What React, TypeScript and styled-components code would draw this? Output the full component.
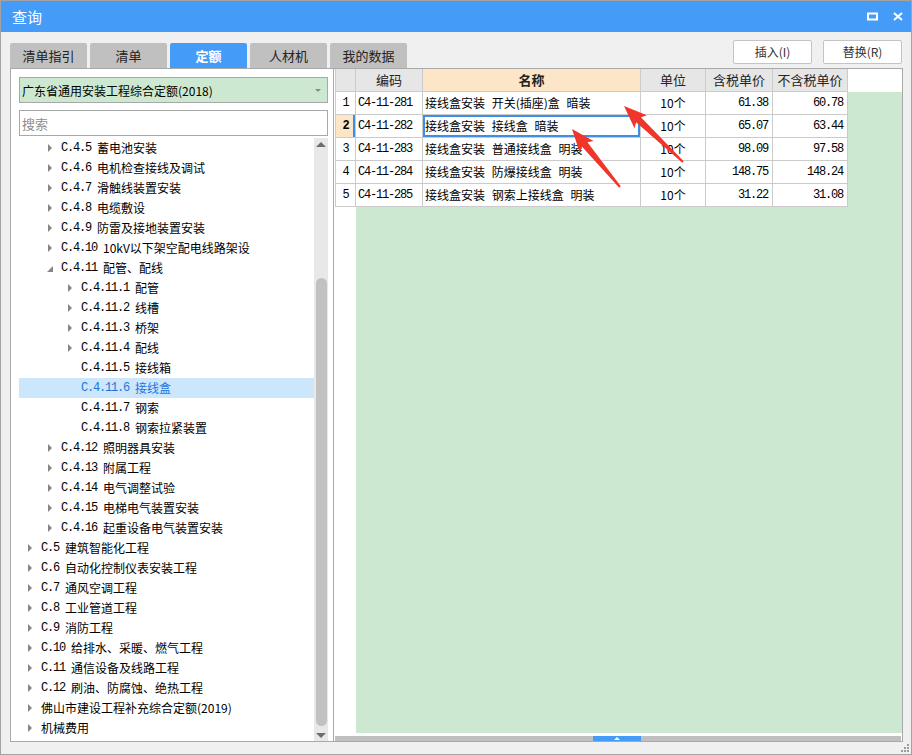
import React from "react";
import styled, { createGlobalStyle } from "styled-components";

const GlobalStyle = createGlobalStyle`
  html, body {
    margin: 0;
    padding: 0;
    background: #ffffff;
  }
  body {
    font-family: "Noto Sans CJK SC", "Liberation Sans", sans-serif;
    font-size: 12px;
    color: #000;
  }
`;

const CJK = `"Noto Sans CJK SC", "Liberation Sans", sans-serif`;
const MONO = `"Liberation Mono", "Noto Sans CJK SC", monospace`;
const BLUE = "#459cf8";
const GREEN = "#cde8d0";
const GRID = "#cbcbcb";

const Window = styled.div`
  position: relative;
  width: 912px;
  height: 755px;
  box-sizing: border-box;
  border: 1px solid #a3a3a3;
  background: #f0f0f0;
  display: flex;
  flex-direction: column;
  font-family: ${CJK};
`;

const TitleBar = styled.div`
  height: 31px;
  flex: none;
  background: ${BLUE};
  display: flex;
  align-items: center;
  padding: 0 8px 0 11px;
  color: #fff;
`;

const Title = styled.div`
  flex: 1;
  font-size: 15px;
  line-height: 31px;
`;

const TitleButtons = styled.div`
  display: flex;
  align-items: center;
  gap: 15px;
`;

const Toolbar = styled.div`
  height: 36px;
  flex: none;
  display: flex;
  justify-content: space-between;
  padding: 0 9px;
`;

const Tabs = styled.div`
  align-self: flex-end;
  display: flex;
  gap: 3px;
`;

const Tab = styled.div<{ $active?: boolean }>`
  width: 77px;
  height: 25px;
  box-sizing: border-box;
  border-radius: 2px 2px 0 0;
  background: ${(p) => (p.$active ? BLUE : "#c0c0c0")};
  color: ${(p) => (p.$active ? "#fff" : "#222")};
  font-weight: ${(p) => (p.$active ? 700 : 400)};
  font-size: 13px;
  line-height: 25px;
  text-align: center;
`;

const Actions = styled.div`
  display: flex;
  gap: 11px;
  padding-top: 8px;
`;

const Button = styled.div`
  width: 79px;
  height: 24px;
  box-sizing: border-box;
  border: 1px solid #c4c4c4;
  border-radius: 2px;
  background: #fff;
  color: #333;
  font-size: 12px;
  line-height: 22px;
  text-align: center;
`;

const Main = styled.div`
  height: 674px;
  flex: none;
  display: flex;
  padding: 0 8px 0 9px;
`;

const LeftPanel = styled.div`
  width: 324px;
  flex: none;
  box-sizing: border-box;
  border: 1px solid #a9a9a9;
  background: #fff;
  padding: 8px 5px 0 8px;
  display: flex;
  flex-direction: column;
`;

const Select = styled.div`
  height: 26px;
  flex: none;
  box-sizing: border-box;
  border: 1px solid #a8a8a8;
  background: ${GREEN};
  display: flex;
  align-items: center;
  padding: 0 6px 0 2px;
  font-size: 12px;
  margin-bottom: 7px;
`;

const SelectText = styled.span`
  flex: 1;
`;

const Caret = styled.span`
  width: 0;
  height: 0;
  border-left: 3px solid transparent;
  border-right: 3px solid transparent;
  border-top: 3px solid #8a8a8a;
`;

const Search = styled.input`
  height: 26px;
  flex: none;
  box-sizing: border-box;
  border: 1px solid #a8a8a8;
  padding: 0 2px;
  margin: 0 0 2px 0;
  font-family: ${CJK};
  font-size: 13px;
  outline: none;
  &::placeholder {
    color: #8f8f8f;
  }
`;

const TreeArea = styled.div`
  flex: 1;
  display: flex;
  min-height: 0;
`;

const TreeList = styled.div`
  flex: 1;
  overflow: hidden;
`;

const TreeRow = styled.div<{ $level: number; $selected?: boolean }>`
  height: 20px;
  display: flex;
  align-items: center;
  padding-left: ${(p) => 9 + p.$level * 20}px;
  background: ${(p) => (p.$selected ? "#cce6fc" : "transparent")};
  color: ${(p) => (p.$selected ? "#1f74dc" : "#000")};
  white-space: nowrap;
`;

const Toggle = styled.span<{ $state: "collapsed" | "expanded" | "leaf" }>`
  width: 13px;
  height: 20px;
  flex: none;
  display: flex;
  align-items: center;
  &::before {
    content: "";
    display: ${(p) => (p.$state === "leaf" ? "none" : "block")};
    width: 0;
    height: 0;
    ${(p) =>
      p.$state === "collapsed"
        ? `border-left: 4px solid #858585;
           border-top: 4px solid transparent;
           border-bottom: 4px solid transparent;`
        : `border-bottom: 6px solid #858585;
           border-left: 6px solid transparent;
           margin-top: 2px;
           margin-left: -1px;`}
  }
`;

const Code = styled.span`
  font-family: ${MONO};
  font-size: 12px;
  letter-spacing: -1.2px;
  margin-right: 6px;
`;

const Name = styled.span`
  font-family: ${CJK};
  font-size: 12px;
  line-height: 20px;
`;

const VScroll = styled.div`
  width: 14px;
  flex: none;
  background: #e8e8e8;
  display: flex;
  flex-direction: column;
  align-items: center;
`;

const ScrollArrow = styled.div<{ $down?: boolean }>`
  height: 12px;
  flex: none;
  display: flex;
  align-items: center;
  justify-content: center;
  &::before {
    content: "";
    width: 0;
    height: 0;
    border-left: 5px solid transparent;
    border-right: 5px solid transparent;
    ${(p) =>
      p.$down
        ? "border-top: 5px solid #6e6e6e;"
        : "border-bottom: 5px solid #6e6e6e;"}
  }
`;

const ScrollTrack = styled.div`
  flex: 1;
  width: 100%;
  display: flex;
  flex-direction: column;
  align-items: center;
`;

const ScrollThumb = styled.div`
  width: 11px;
  height: 448px;
  margin-top: 128px;
  border-radius: 6px;
  background: #c1c1c1;
`;

const RightPanel = styled.div`
  flex: 1;
  box-sizing: border-box;
  border: 1px solid #a9a9a9;
  border-left: none;
  background: #fff;
  padding-left: 1px;
  display: flex;
  flex-direction: column;
`;

const HeaderRow = styled.div`
  height: 23px;
  flex: none;
  display: flex;
  background: #fff;
`;

const Body = styled.div`
  flex: 1;
  background: linear-gradient(90deg, #fff 0 21px, ${GREEN} 21px);
`;

const DataRow = styled.div`
  height: 23px;
  display: flex;
`;

const Cell = styled.div<{
  $w: number;
  $align?: string;
  $mono?: boolean;
  $bg?: string;
  $bold?: boolean;
  $first?: boolean;
  $focus?: boolean;
  $marker?: boolean;
  $header?: boolean;
}>`
  width: ${(p) => p.$w}px;
  flex: none;
  height: 23px;
  box-sizing: border-box;
  border-right: 1px solid ${GRID};
  border-bottom: 1px solid ${GRID};
  border-left: ${(p) => (p.$first ? `1px solid ${GRID}` : "none")};
  background: ${(p) => p.$bg || "#fff"};
  text-align: ${(p) => p.$align || "left"};
  padding: ${(p) =>
    p.$align === "right" ? "0 4px 0 0" : p.$align === "center" ? "0" : "0 0 0 2px"};
  font-family: ${(p) => (p.$mono ? MONO : CJK)};
  font-size: ${(p) => (p.$header ? 13 : 12)}px;
  letter-spacing: ${(p) => (p.$mono ? "-1.2px" : "0")};
  word-spacing: 4px;
  font-weight: ${(p) => (p.$bold ? 700 : 400)};
  line-height: 22px;
  white-space: nowrap;
  overflow: hidden;
  color: ${(p) => (p.$header ? "#222" : "#000")};
  box-shadow: ${(p) =>
    p.$focus
      ? "inset 0 0 0 2px #3d8fe6"
      : p.$marker
      ? "inset -2px 0 0 #3d8fe6"
      : "none"};
`;

const BottomGap = styled.div`
  height: 3px;
  flex: none;
`;

const HScroll = styled.div`
  height: 5px;
  flex: none;
  margin-right: 1px;
  background: #c0c0c0;
  display: flex;
`;

const HThumb = styled.div`
  width: 48px;
  margin-left: 258px;
  background: ${BLUE};
  display: flex;
  align-items: center;
  justify-content: center;
  &::before {
    content: "";
    width: 0;
    height: 0;
    border-left: 3px solid transparent;
    border-right: 3px solid transparent;
    border-bottom: 3px solid #fff;
  }
`;

const Footer = styled.div`
  flex: 1;
  display: flex;
  justify-content: flex-end;
  align-items: flex-end;
  padding: 0 2px 2px 0;
`;

const Overlay = styled.svg`
  position: absolute;
  top: -1px;
  left: -1px;
  pointer-events: none;
`;

type Node = {
  level: number;
  code?: string;
  name: string;
  state: "collapsed" | "expanded" | "leaf";
  selected?: boolean;
};

const tree: Node[] = [
  { level: 1, code: "C.4.5", name: "蓄电池安装", state: "collapsed" },
  { level: 1, code: "C.4.6", name: "电机检查接线及调试", state: "collapsed" },
  { level: 1, code: "C.4.7", name: "滑触线装置安装", state: "collapsed" },
  { level: 1, code: "C.4.8", name: "电缆敷设", state: "collapsed" },
  { level: 1, code: "C.4.9", name: "防雷及接地装置安装", state: "collapsed" },
  { level: 1, code: "C.4.10", name: "10kV以下架空配电线路架设", state: "collapsed" },
  { level: 1, code: "C.4.11", name: "配管、配线", state: "expanded" },
  { level: 2, code: "C.4.11.1", name: "配管", state: "collapsed" },
  { level: 2, code: "C.4.11.2", name: "线槽", state: "collapsed" },
  { level: 2, code: "C.4.11.3", name: "桥架", state: "collapsed" },
  { level: 2, code: "C.4.11.4", name: "配线", state: "collapsed" },
  { level: 2, code: "C.4.11.5", name: "接线箱", state: "leaf" },
  { level: 2, code: "C.4.11.6", name: "接线盒", state: "leaf", selected: true },
  { level: 2, code: "C.4.11.7", name: "钢索", state: "leaf" },
  { level: 2, code: "C.4.11.8", name: "钢索拉紧装置", state: "leaf" },
  { level: 1, code: "C.4.12", name: "照明器具安装", state: "collapsed" },
  { level: 1, code: "C.4.13", name: "附属工程", state: "collapsed" },
  { level: 1, code: "C.4.14", name: "电气调整试验", state: "collapsed" },
  { level: 1, code: "C.4.15", name: "电梯电气装置安装", state: "collapsed" },
  { level: 1, code: "C.4.16", name: "起重设备电气装置安装", state: "collapsed" },
  { level: 0, code: "C.5", name: "建筑智能化工程", state: "collapsed" },
  { level: 0, code: "C.6", name: "自动化控制仪表安装工程", state: "collapsed" },
  { level: 0, code: "C.7", name: "通风空调工程", state: "collapsed" },
  { level: 0, code: "C.8", name: "工业管道工程", state: "collapsed" },
  { level: 0, code: "C.9", name: "消防工程", state: "collapsed" },
  { level: 0, code: "C.10", name: "给排水、采暖、燃气工程", state: "collapsed" },
  { level: 0, code: "C.11", name: "通信设备及线路工程", state: "collapsed" },
  { level: 0, code: "C.12", name: "刷油、防腐蚀、绝热工程", state: "collapsed" },
  { level: 0, name: "佛山市建设工程补充综合定额(2019)", state: "collapsed" },
  { level: 0, name: "机械费用", state: "collapsed" },
];

type Col = {
  key: "code" | "name" | "unit" | "tax" | "noTax";
  title: string;
  width: number;
  align: string;
  mono?: boolean;
};

const columns: Col[] = [
  { key: "code", title: "编码", width: 67, align: "left", mono: true },
  { key: "name", title: "名称", width: 218, align: "left" },
  { key: "unit", title: "单位", width: 65, align: "center" },
  { key: "tax", title: "含税单价", width: 67, align: "right", mono: true },
  { key: "noTax", title: "不含税单价", width: 75, align: "right", mono: true },
];

const rows = [
  { code: "C4-11-281", name: "接线盒安装 开关(插座)盒 暗装", unit: "10个", tax: "61.38", noTax: "60.78" },
  { code: "C4-11-282", name: "接线盒安装 接线盒 暗装", unit: "10个", tax: "65.07", noTax: "63.44" },
  { code: "C4-11-283", name: "接线盒安装 普通接线盒 明装", unit: "10个", tax: "98.09", noTax: "97.58" },
  { code: "C4-11-284", name: "接线盒安装 防爆接线盒 明装", unit: "10个", tax: "148.75", noTax: "148.24" },
  { code: "C4-11-285", name: "接线盒安装 钢索上接线盒 明装", unit: "10个", tax: "31.22", noTax: "31.08" },
];

const SELECTED_ROW = 1;

// red annotation arrow, drawn along its own axis from tail to tip
const Arrow: React.FC<{ x1: number; y1: number; x2: number; y2: number }> = ({
  x1,
  y1,
  x2,
  y2,
}) => {
  const len = Math.hypot(x2 - x1, y2 - y1);
  const angle = (Math.atan2(y2 - y1, x2 - x1) * 180) / Math.PI;
  const pts = [
    [0, -1],
    [len - 20, -3.5],
    [len - 23, -9],
    [len, 0],
    [len - 23, 9],
    [len - 20, 3.5],
    [0, 1],
  ]
    .map((p) => p.join(","))
    .join(" ");
  return (
    <g transform={`translate(${x1} ${y1}) rotate(${angle})`}>
      <polygon points={pts} fill="#f0352b" />
    </g>
  );
};

export default function App() {
  return (
    <>
      <GlobalStyle />
      <Window>
        <TitleBar>
          <Title>查询</Title>
          <TitleButtons>
            <svg width="11" height="9" viewBox="0 0 11 9">
              <rect x="1" y="1.5" width="9" height="6" fill="none" stroke="#fff" strokeWidth="2" />
            </svg>
            <svg width="10" height="9" viewBox="0 0 10 9">
              <path d="M1 1L9 8M9 1L1 8" stroke="#fff" strokeWidth="2" />
            </svg>
          </TitleButtons>
        </TitleBar>

        <Toolbar>
          <Tabs>
            <Tab>清单指引</Tab>
            <Tab>清单</Tab>
            <Tab $active>定额</Tab>
            <Tab>人材机</Tab>
            <Tab>我的数据</Tab>
          </Tabs>
          <Actions>
            <Button>插入(I)</Button>
            <Button>替换(R)</Button>
          </Actions>
        </Toolbar>

        <Main>
          <LeftPanel>
            <Select>
              <SelectText>广东省通用安装工程综合定额(2018)</SelectText>
              <Caret />
            </Select>
            <Search placeholder="搜索" />
            <TreeArea>
              <TreeList>
                {tree.map((n, i) => (
                  <TreeRow key={i} $level={n.level} $selected={n.selected}>
                    <Toggle $state={n.state} />
                    {n.code && <Code>{n.code}</Code>}
                    <Name>{n.name}</Name>
                  </TreeRow>
                ))}
              </TreeList>
              <VScroll>
                <ScrollArrow />
                <ScrollTrack>
                  <ScrollThumb />
                </ScrollTrack>
                <ScrollArrow $down />
              </VScroll>
            </TreeArea>
          </LeftPanel>

          <RightPanel>
            <HeaderRow>
              <Cell $w={21} $first $bg="#e6e6e6" $header />
              {columns.map((c) => (
                <Cell
                  key={c.key}
                  $w={c.width}
                  $align="center"
                  $header
                  $bold={c.key === "name"}
                  $bg={c.key === "name" ? "#fde5c7" : "#e6e6e6"}
                >
                  {c.title}
                </Cell>
              ))}
            </HeaderRow>
            <Body>
              {rows.map((r, i) => {
                const sel = i === SELECTED_ROW;
                return (
                  <DataRow key={r.code}>
                    <Cell
                      $w={21}
                      $first
                      $align="center"
                      $mono
                      $bold={sel}
                      $marker={sel}
                      $bg={sel ? "#fde5c7" : "#fff"}
                    >
                      {i + 1}
                    </Cell>
                    {columns.map((c) => (
                      <Cell
                        key={c.key}
                        $w={c.width}
                        $align={c.align}
                        $mono={c.mono}
                        $focus={sel && c.key === "name"}
                      >
                        {r[c.key]}
                      </Cell>
                    ))}
                  </DataRow>
                );
              })}
            </Body>
            <BottomGap />
            <HScroll>
              <HThumb />
            </HScroll>
          </RightPanel>
        </Main>

        <Footer>
          <svg width="8" height="8" viewBox="0 0 8 8">
            <rect x="6" y="0" width="2" height="2" fill="#9c9c9c" />
            <rect x="3" y="3" width="2" height="2" fill="#9c9c9c" />
            <rect x="6" y="3" width="2" height="2" fill="#9c9c9c" />
            <rect x="0" y="6" width="2" height="2" fill="#9c9c9c" />
            <rect x="3" y="6" width="2" height="2" fill="#9c9c9c" />
            <rect x="6" y="6" width="2" height="2" fill="#9c9c9c" />
          </svg>
        </Footer>

        <Overlay width="912" height="755">
          <Arrow x1={683} y1={162} x2={624} y2={106} />
          <Arrow x1={620} y1={187} x2={572} y2={129} />
        </Overlay>
      </Window>
    </>
  );
}
